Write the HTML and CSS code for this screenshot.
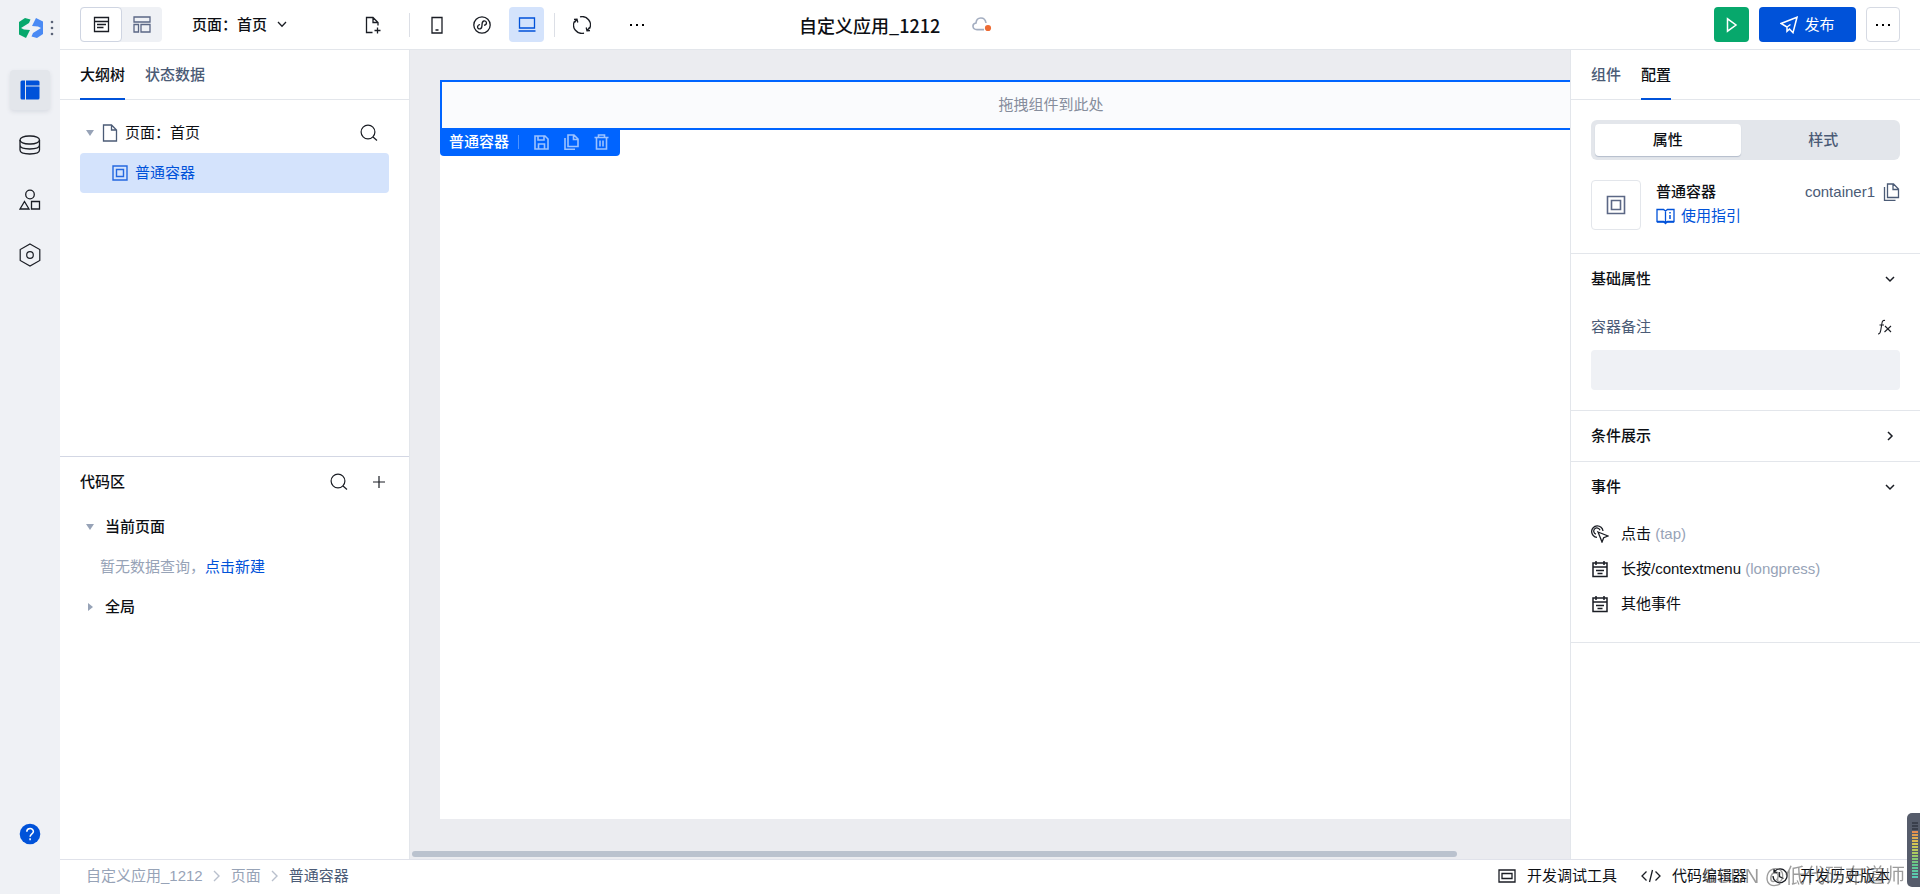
FILE: index.html
```html
<!DOCTYPE html>
<html lang="zh-CN">
<head>
<meta charset="utf-8">
<title>自定义应用_1212</title>
<link rel="stylesheet" href="styles.css">
</head>
<body>
<div class="app">
  <nav class="rail" aria-label="主导航">
    <div class="rail-logo">
      <svg class="logo" width="24" height="20" viewBox="0 0 24 20">
        <path fill="#07a86c" d="M0 4 6 0l5.500 1.500L10 5 2 10l3 1.500 6 .5L7 20l-7-3.500z"/>
        <path fill="#4a8af4" d="m24 16-6 4-5.500-1.500L14 15l8-5-3-1.500-6-.5L17 0l7 3.500z"/>
      </svg>
      <svg width="4" height="16" viewBox="0 0 4 16" fill="#5b6478"><circle cx="2" cy="2" r="1.300"/><circle cx="2" cy="8" r="1.300"/><circle cx="2" cy="14" r="1.300"/></svg>
    </div>
    <button class="rail-btn rail-active" aria-label="页面设计">
      <svg width="20" height="20" viewBox="0 0 20 20" fill="#0052d9"><path d="M2 .5h3V19.500H2A1.500 1.500 0 0 1 .5 18V2A1.500 1.500 0 0 1 2 .5zM6 .5h12A1.500 1.500 0 0 1 19.500 2v3.500H6zM6 6.500h13.500V18a1.500 1.500 0 0 1-1.500 1.500H6z"/></svg>
    </button>
    <button class="rail-btn" aria-label="数据源">
      <svg class="ln" width="22" height="20" viewBox="0 0 22 20"><rect x="1" y="1" width="19.500" height="8" rx="9" ry="4"/><path d="M1 5v10c0 5.300 19.500 5.300 19.500 0V5M1 10c0 5.300 19.500 5.300 19.500 0"/></svg>
    </button>
    <button class="rail-btn" aria-label="组件库">
      <svg class="ln" width="22" height="22" viewBox="0 0 22 22"><circle cx="11" cy="5.500" r="4.300"/><path d="M5.500 12.500 10 20H1zM12.500 12.500h8V20h-8z"/></svg>
    </button>
    <button class="rail-btn" aria-label="设置">
      <svg class="ln thin" width="22" height="24" viewBox="0 0 22 24"><path d="m11 1 9.800 5.500v11L11 23l-9.800-5.500v-11z"/><circle cx="11" cy="12" r="3.300"/></svg>
    </button>
    <button class="help" aria-label="帮助">
      <svg width="22" height="22" viewBox="0 0 22 22"><circle cx="11" cy="11" r="10.300" fill="#0052d9"/><path d="M7.800 8.800c0-4.200 6.600-4.200 6.600-.3 0 2.400-3.300 2.300-3.300 5.200M11.100 15.300v2" fill="none" stroke="#fff" stroke-width="1.500"/></svg>
    </button>
  </nav>

  <div class="main">
    <header class="topbar">
      <div class="mode">
        <button class="mode-btn mode-on" aria-label="页面"><svg class="ln" width="17" height="17" viewBox="0 0 17 17"><path d="M1.500 1.500h14v14h-14zM1.500 5.500h14M4 8.500h9M4 11.500h6.500"/></svg></button>
        <button class="mode-btn" aria-label="布局"><svg class="ln muted" width="18" height="17" viewBox="0 0 18 17"><path d="M1 1h16v5H1zM1 8.500h4.500V16H1zM8 8.500h9V16H8z"/></svg></button>
      </div>
      <button class="page-pick">页面：首页 <svg class="ln" width="10" height="7" viewBox="0 0 10 7"><path d="m1 1 4 4.200L9 1"/></svg></button>
      <div class="tools">
        <button class="tool tool-new" aria-label="新建页面"><svg class="ln" width="17" height="18" viewBox="0 0 17 18"><path d="M7.500 16.500h-6v-15h6.500l5 5V9.500M8 1.500v5h5M12.500 11.500v6M9.500 14.500h6"/></svg></button>
        <span class="rule"></span>
        <button class="tool" aria-label="手机"><svg class="ln" width="12" height="18" viewBox="0 0 12 18"><path d="M1 1.500h10v15.500H1zM4.500 14h3"/></svg></button>
        <button class="tool" aria-label="小程序"><svg class="ln" width="18" height="18" viewBox="0 0 18 18"><circle cx="9" cy="9" r="8.200"/><path d="M7 8.500c-4 1.200-2.500 5 .2 4.400C9 12.500 9 11 9 9s0-3.500 1.800-4c2.700-.6 4.200 3.200.2 4.400"/></svg></button>
        <button class="tool tool-on" aria-label="电脑"><svg width="18" height="15" viewBox="0 0 18 15" fill="none" stroke="#0052d9" stroke-width="1.300"><path d="M1.500 1h15v10h-15zM.5 14h17"/></svg></button>
        <span class="rule"></span>
        <button class="tool tool-turn" aria-label="刷新"><svg class="ln" width="18" height="18" viewBox="0 0 18 18"><path d="M7 .9a8.300 8.300 0 0 1 9.500 11.800M11 17.100A8.300 8.300 0 0 1 1.500 5.300M1 3.500l3-.3.800 3.300M17 14.500l-3 .3-.8-3.300M4 3.200 1.500 6.500M14 14.800l2.500-3.300"/></svg></button>
        <button class="tool" aria-label="更多"><svg width="16" height="4" viewBox="0 0 16 4"><path d="M1 1h2v2H1zM7 1h2v2H7zM13 1h2v2h-2z"/></svg></button>
      </div>
      <h1 class="app-name">自定义应用_1212</h1>
      <svg class="cloud" width="20" height="15" viewBox="0 0 20 15"><path d="M12 12.600H5C0 12.600-.3 6.500 4 6 4.500-.5 13-.8 14 6" fill="none" stroke="#a3adc0" stroke-width="1.600"/><circle cx="16" cy="11" r="3.100" fill="#ed6c35"/></svg>
      <div class="actions">
        <button class="play" aria-label="预览"><svg width="12" height="16" viewBox="0 0 12 16" fill="none" stroke="#fff" stroke-width="1.500"><path d="M1.500 1.800v12.400L10 8z"/></svg></button>
        <button class="publish"><svg width="18" height="18" viewBox="0 0 18 18" fill="none" stroke="#fff" stroke-width="1.500"><path d="m1 7.500 16-6.200-4 15.400L9.500 13l-2.500 2.300V11zM7 11l3.500-2.500"/></svg>发布</button>
        <button class="more" aria-label="更多操作"><svg width="16" height="4" viewBox="0 0 16 4"><path d="M1 1h2v2H1zM7 1h2v2H7zM13 1h2v2h-2z"/></svg></button>
      </div>
    </header>

    <div class="work">
      <aside class="side">
        <section class="outline">
          <div class="tabs"><button class="tab tab-on">大纲树</button><button class="tab">状态数据</button></div>
          <div class="tree">
            <div class="tree-row">
              <svg class="caret" width="8" height="6" viewBox="0 0 8 6"><path d="M0 0h8L4 6z"/></svg>
              <svg class="ln file" width="16" height="18" viewBox="0 0 16 18"><path d="M1.500 1h8l5 5v11h-13zM9.500 1v5h5"/></svg>
              <span class="grow">页面：首页</span>
              <button class="icon-btn" aria-label="搜索"><svg class="ln thin" width="18" height="18" viewBox="0 0 18 18"><circle cx="8" cy="8" r="6.900"/><path d="m13 13 4 3.500"/></svg></button>
            </div>
            <div class="tree-row picked">
              <svg width="16" height="16" viewBox="0 0 16 16" fill="none" stroke="#2468e0" stroke-width="1.400"><path d="M1 1h14v14H1zM4.500 4.500h7v7h-7z"/></svg>
              <span>普通容器</span>
            </div>
          </div>
        </section>
        <section class="code">
          <div class="code-head">
            <h2 class="heading grow">代码区</h2>
            <button class="icon-btn" aria-label="搜索代码"><svg class="ln thin" width="18" height="18" viewBox="0 0 18 18"><circle cx="8" cy="8" r="6.900"/><path d="m13 13 4 3.500"/></svg></button>
            <button class="icon-btn" aria-label="新增"><svg class="ln thin" width="12" height="12" viewBox="0 0 12 12"><path d="M6 0v12M0 6h12"/></svg></button>
          </div>
          <div class="code-row"><svg class="caret" width="8" height="6" viewBox="0 0 8 6"><path d="M0 0h8L4 6z"/></svg><h3 class="heading">当前页面</h3></div>
          <p class="empty">暂无数据查询，<a class="link" href="#new">点击新建</a></p>
          <div class="code-row"><svg class="caret" width="8" height="8" viewBox="0 0 8 8"><path d="M2 0v8l5-4z"/></svg><h3 class="heading">全局</h3></div>
        </section>
      </aside>

      <main class="canvas">
        <div class="stage">
          <div class="slot">拖拽组件到此处
            <div class="slot-bar">
              <span class="slot-name">普通容器</span>
              <button class="slot-btn" aria-label="保存"><svg width="15" height="15" viewBox="0 0 15 15"><path d="M1 1h10l3 3v10H1zM4 1v4h6V1M4.500 14V9h6v5"/></svg></button>
              <button class="slot-btn" aria-label="复制"><svg width="15" height="16" viewBox="0 0 15 16"><path d="M4 1h6l4 4v7.500H4zM9.500 1v4.500H14M1 4v11.200h10"/></svg></button>
              <button class="slot-btn" aria-label="删除"><svg width="15" height="16" viewBox="0 0 15 16"><path d="M.5 3.500h14M4.500 3V1h6v2M2.500 4v11h10V4M6 6.500v6M9 6.500v6"/></svg></button>
            </div>
          </div>
        </div>
        <div class="scroll"></div>
      </main>

      <aside class="props">
        <div class="tabs"><button class="tab">组件</button><button class="tab tab-on">配置</button></div>
        <section class="summary">
          <div class="switch"><button class="switch-btn switch-on">属性</button><button class="switch-btn">样式</button></div>
          <div class="ident">
            <div class="thumb"><svg width="20" height="20" viewBox="0 0 20 20" fill="none" stroke="#5b6785" stroke-width="1.600"><path d="M1.500 1.500h17v17h-17zM5.500 5.500h9v9h-9z"/></svg></div>
            <div class="grow">
              <h2 class="heading ident-line">普通容器</h2>
              <a class="link ident-line" href="#guide"><svg width="19" height="17" viewBox="0 0 19 17" fill="none" stroke="#0052d9" stroke-width="1.300"><path d="M9.500 3v11M1 1.500h6.500l2 1.500 2-1.500H18v12h-6.500l-2 2-2-2H1z"/><path d="M14 7v4M14 4v1.500M1 14h17" stroke-width="1.500"/></svg>使用指引</a>
            </div>
            <div class="ident-id">container1 <button class="icon-btn" aria-label="复制标识"><svg width="17" height="18" viewBox="0 0 17 18" fill="none" stroke="#4b5b76" stroke-width="1.300"><path d="M4.500 1h6l5 5v8.500h-11zM10 1v5.500h5.500M1.500 4v13.300h11"/></svg></button></div>
          </div>
        </section>
        <section class="group">
          <button class="group-head">基础属性<svg class="ln bold" width="10" height="10" viewBox="0 0 10 10"><path d="m1 3 4 4 4-4"/></svg></button>
          <div class="field">
            <label for="note" class="grow">容器备注</label>
            <button class="icon-btn" aria-label="表达式"><svg class="ln fx" width="16" height="16" viewBox="0 0 16 16"><path d="M1 15c2 0 2.300-1 2.700-3.500l1.200-7C5.300 2 6 1 8 1.500M2.500 6H7M8 7l6 6M14 7l-6.500 6"/></svg></button>
          </div>
          <input id="note" class="input" type="text">
        </section>
        <section class="group"><button class="group-head">条件展示<svg class="ln bold" width="10" height="10" viewBox="0 0 10 10"><path d="m3 1 4 4-4 4"/></svg></button></section>
        <section class="group">
          <button class="group-head">事件<svg class="ln bold" width="10" height="10" viewBox="0 0 10 10"><path d="m1 3 4 4 4-4"/></svg></button>
          <ul class="events">
            <li><button class="event"><svg class="ln" width="18" height="18" viewBox="0 0 18 18"><path d="m7 7 10 4-4.300 1.700L11 17z"/><path d="M12 6A5.700 5.700 0 1 0 6 12.300M9 5.200a3.200 3.200 0 1 0-4 4"/></svg><span>点击 <span class="dim">(tap)</span></span></button></li>
            <li><button class="event"><svg class="ln cal" width="18" height="18" viewBox="0 0 18 18"><path d="M2 3h14v13.500H2zM2 7h14M5 1v4M13 1v4M5 10.500h8M6.500 13.500h5"/></svg><span>长按/contextmenu <span class="dim">(longpress)</span></span></button></li>
            <li><button class="event"><svg class="ln cal" width="18" height="18" viewBox="0 0 18 18"><path d="M2 3h14v13.500H2zM2 7h14M5 1v4M13 1v4M5 10.500h8M6.500 13.500h5"/></svg><span>其他事件</span></button></li>
          </ul>
        </section>
      </aside>
    </div>

    <footer class="foot">
      <nav class="crumbs" aria-label="路径">
        <span>自定义应用_1212</span>
        <svg width="8" height="12" viewBox="0 0 8 12"><path d="m1 1 5 5-5 5"/></svg>
        <span>页面</span>
        <svg width="8" height="12" viewBox="0 0 8 12"><path d="m1 1 5 5-5 5"/></svg>
        <span class="here">普通容器</span>
      </nav>
      <div class="foot-tools">
        <button class="foot-btn"><svg class="ln" width="18" height="14" viewBox="0 0 18 14"><path d="M1 1h16v12H1zM4 4.500h10v5H4z"/></svg>开发调试工具</button>
        <button class="foot-btn"><svg class="ln" width="20" height="14" viewBox="0 0 20 14"><path d="M5.500 2.500 1 7l4.500 4.500M14.500 2.500 19 7l-4.500 4.500M11.500 1l-3 12"/></svg>代码编辑器</button>
        <button class="foot-btn"><svg class="ln" width="18" height="16" viewBox="0 0 18 16"><path d="M3.500 3.500A7 7 0 1 1 2 8M3 1v3.500h3.500M8.500 4v4.500l4 2"/></svg>开发历史版本</button>
      </div>
    </footer>
  </div>
</div>
<div class="watermark">CSDN @低代码布道师</div>
<div class="meter"><span class="meter-bars"></span></div>
</body>
</html>
```
FILE: styles.css
```css
* { box-sizing: border-box; }
body {
  margin: 0;
  color: #0d0f14;
  font: 15px/20px "Liberation Sans", "Noto Sans CJK SC", sans-serif;
  background: #fff;
}
button { font: inherit; color: inherit; border: 0; padding: 0; background: none; cursor: pointer; }
h1, h2, h3, p, ul { margin: 0; padding: 0; list-style: none; }
svg { display: block; flex: none; }
a { text-decoration: none; }
.ln { fill: none; stroke: #1a1d24; stroke-width: 1.3; }
.muted { stroke: #5b6785; }
.thin { stroke-width: 1.2; }
.bold { stroke-width: 1.5; }
.fx { stroke-width: 1.1; }
.grow { flex: 1; }
.heading { font-size: 15px; font-weight: 500; line-height: 20px; }
.link { color: #0052d9; }
.icon-btn { display: flex; align-items: center; justify-content: center; min-width: 18px; }

.app { display: flex; height: 100vh; overflow: hidden; }
.rail {
  display: flex; flex-direction: column; align-items: center; gap: 15px;
  width: 60px; flex: none; padding: 15px 0 49px; background: #eff1f5;
}
.rail-logo { display: flex; align-items: center; align-self: flex-end; gap: 7px; height: 25px; margin: 0 6px 15px 0; }
.rail-btn { display: flex; align-items: center; justify-content: center; width: 40px; height: 40px; border-radius: 4px; }
.rail-active { background: #e3e6eb; box-shadow: 0 2px 4px #d9dce3; }
.help { margin-top: auto; }

.main { display: flex; flex-direction: column; flex: 1; min-width: 0; }
.topbar { display: flex; align-items: center; flex: none; height: 50px; padding: 0 20px; border-bottom: 1px solid #e3e6eb; }
.mode { display: flex; background: #eff1f5; border-radius: 4px; }
.mode-btn { display: flex; align-items: center; justify-content: center; width: 40px; height: 35px; }
.mode-on { width: 42px; background: #fff; border: 1px solid #cfd5e2; border-radius: 4px; }
.page-pick { display: flex; align-items: center; gap: 10px; margin-left: 30px; font-weight: 500; }
.tools { display: flex; align-items: center; gap: 10px; margin-left: 69px; }
.tool { display: flex; align-items: center; justify-content: center; width: 35px; height: 35px; border-radius: 4px; }
.tool:last-child { margin-left: 10px; }
.tool-new { margin-right: 8px; }
.tool-on { background: #d4e3fc; }
.rule { width: 1px; height: 24px; background: #dcdfe6; }
.rule + .tool { margin-left: -1px; }
.app-name { margin-left: 145px; font: 500 18px/24px "Noto Sans CJK SC", sans-serif; }
.cloud { margin-left: 32px; }
.actions { display: flex; gap: 10px; margin-left: auto; }
.play, .publish, .more { display: flex; align-items: center; justify-content: center; gap: 6px; height: 35px; border-radius: 4px; }
.play { width: 35px; background: #07a86c; }
.publish { width: 97px; color: #fff; background: #0052d9; }
.more { width: 34px; border: 1px solid #d6dae3; }

.work { display: flex; flex: 1; min-height: 0; }
.side { display: flex; flex-direction: column; width: 350px; flex: none; border-right: 1px solid #e3e6eb; }
.tabs { display: flex; gap: 20px; height: 50px; padding: 0 20px; border-bottom: 1px solid #e3e6eb; }
.tab { height: 50px; border-top: 2px solid transparent; border-bottom: 2px solid transparent; color: #4b5b76; font-weight: 500; }
.tab-on { color: #0d0f14; border-bottom-color: #0052d9; }
.outline { flex: 1; }
.tree { padding: 12px 20px; }
.tree-row { display: flex; align-items: center; height: 41px; padding: 0 11px 0 6px; }
.caret { fill: #97a3b7; }
.file { margin: 0 7px 0 8px; stroke: #4b5b76; }
.picked { gap: 7px; height: 40px; padding-left: 32px; color: #0052d9; background: #d4e3fc; border-radius: 4px; }
.code { height: 50%; margin-bottom: -1px; border-top: 1px solid #d3d7e4; }
.code-head { display: flex; align-items: center; gap: 22px; height: 50px; padding: 0 21px 0 20px; }
.code-row { display: flex; align-items: center; gap: 11px; height: 40px; padding-left: 26px; }
.empty { padding: 10px 0 10px 40px; color: #97a3b7; }

.canvas { display: flex; flex-direction: column; flex: 1; min-width: 0; padding: 30px 0 2px 30px; overflow: hidden; background: #ebecf0; }
.stage { flex: 1; width: 1222px; margin-bottom: 32px; background: #fff; }
.slot { position: relative; height: 50px; border: 2px solid #0064ff; color: #868d9c; line-height: 46px; text-align: center; background: #fafbfd; }
.slot-bar {
  position: absolute; top: 46px; left: -2px; display: flex; align-items: center; gap: 15px;
  width: 180px; height: 28px; padding-left: 9px; color: #fff; background: #0064ff; border-radius: 0 0 4px 4px;
}
.slot-name { width: 70px; border-right: 1px solid #4d93ff; font-weight: 500; line-height: 14px; text-align: left; }
.slot-btn svg { fill: none; stroke: #9cc2ff; stroke-width: 1.6; }
.scroll { width: 92.5%; height: 6px; margin-left: -28px; border-radius: 3px; background: #bac2ce; }

.props { width: 350px; flex: none; border-left: 1px solid #e3e6eb; }
.summary { padding: 20px 20px 23px; }
.switch { display: flex; gap: 10px; height: 40px; padding: 4px; background: #e3e6eb; border-radius: 6px; }
.switch-btn { flex: 1; color: #4b5b76; font-weight: 500; border-radius: 4px; }
.switch-on { color: #0d0f14; background: #fff; box-shadow: 0 1px 1px #b3bccb; }
.ident { display: flex; gap: 15px; margin-top: 20px; }
.thumb { display: flex; align-items: center; justify-content: center; width: 50px; height: 50px; border: 1px solid #e3e6eb; border-radius: 4px; }
.ident-line { display: flex; align-items: center; gap: 6px; height: 24px; line-height: 24px; }
.ident-id { display: flex; align-items: center; gap: 7px; height: 24px; color: #4b5b76; }
.group { padding: 0 20px; border-top: 1px solid #e3e6eb; }
.group:last-child { border-bottom: 1px solid #e3e6eb; }
.group-head { display: flex; align-items: center; justify-content: space-between; width: 100%; height: 50px; padding-right: 5px; font-weight: 500; }
.field { display: flex; align-items: center; height: 46px; padding-right: 6px; color: #4b5b76; }
.input { display: block; width: 100%; height: 40px; margin-bottom: 20px; padding: 0 10px; border: 0; border-radius: 4px; font: inherit; background: #eff1f5; }
.events { padding: 4px 0 21px; }
.event { display: flex; align-items: center; gap: 12px; height: 35px; text-align: left; }
.cal { stroke-width: 1.5; }
.dim { color: #97a3b7; }

.foot { display: flex; align-items: center; justify-content: space-between; flex: none; height: 35px; padding: 0 30px 2px 26px; border-top: 1px solid #e0e2ea; }
.crumbs { display: flex; align-items: center; gap: 10px; color: #97a3b7; }
.crumbs svg { fill: none; stroke: #b9c0cd; stroke-width: 1.4; }
.here { color: #4b5b76; }
.foot-tools { display: flex; gap: 24px; }
.foot-btn { display: flex; align-items: center; gap: 11px; }
.watermark { position: fixed; right: 15px; bottom: 6px; color: rgba(90, 90, 90, .6); font-size: 20px; line-height: 24px; pointer-events: none; }
.meter { position: fixed; right: 0; bottom: 7px; width: 13px; height: 74px; padding: 8px 2px 8px 5px; border-radius: 5px 0 0 5px; background: #565c6b; }
.meter-bars {
  display: block; height: 100%;
  background: repeating-linear-gradient(#565c6b 0 1px, transparent 1px 3px), linear-gradient(#3a3f4c 0 17%, #e88b50 18%, #d9c552 38%, #a5cb62 58%, #62c78c 75%, #58cdbb);
}
```
